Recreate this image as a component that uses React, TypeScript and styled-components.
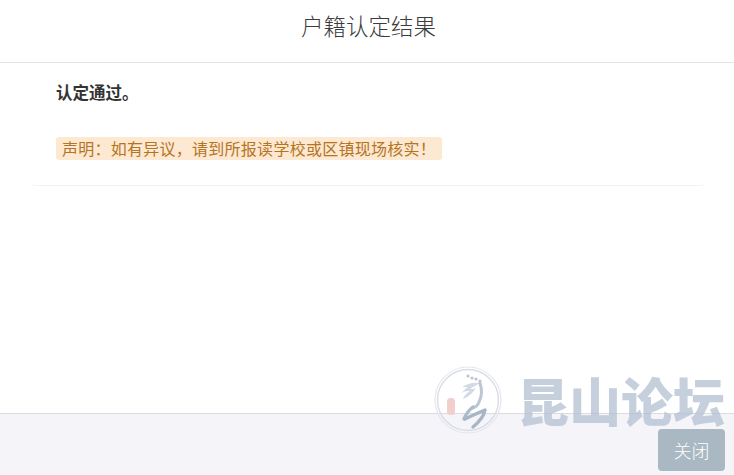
import React from 'react';
import styled, { createGlobalStyle } from 'styled-components';

const GlobalStyle = createGlobalStyle`
  html, body {
    margin: 0;
    padding: 0;
    background: #fff;
    overflow: hidden;
  }
  * {
    box-sizing: border-box;
  }
`;

const Dialog = styled.div`
  position: relative;
  display: flex;
  flex-direction: column;
  width: 734px;
  height: 475px;
  font-family: "Microsoft YaHei", "Noto Sans CJK SC", sans-serif;
  color: #333;
`;

const Header = styled.header`
  height: 63px;
  flex: none;
  padding-left: 3px;
  border-bottom: 1px solid #e5e5e5;
  text-align: center;
  font-size: 22.5px;
  line-height: 50px;
  font-weight: 300;
  color: #3c3c3c;
`;

const Body = styled.main`
  flex: 1;
  padding: 0 30px 0 32px;
`;

const Panel = styled.section`
  height: 123px;
  padding: 16px 24px 0;
  border-bottom: 1px solid #f3f3f3;
  border-radius: 0 0 4px 4px;
`;

const Result = styled.p`
  margin: 0;
  font-size: 16.5px;
  line-height: 26px;
  font-weight: 700;
  color: #333;
`;

const Notice = styled.span`
  display: inline-block;
  margin-top: 32px;
  height: 23px;
  padding: 0 6px;
  border-radius: 3px;
  background: #fde8d2;
  color: #b5741f;
  font-size: 16px;
  line-height: 23px;
  letter-spacing: 0.26px;
  white-space: nowrap;
`;

const Footer = styled.footer`
  height: 62px;
  flex: none;
  display: flex;
  justify-content: flex-end;
  align-items: flex-end;
  padding: 0 9px 4px 0;
  background: #f4f4f9;
  border-top: 1px solid #dcdce0;
`;

const CloseButton = styled.button`
  position: relative;
  z-index: 2;
  width: 67px;
  height: 42px;
  padding: 0;
  border: 0;
  border-radius: 4px;
  background: #a9b8c2;
  color: #fff;
  font-family: inherit;
  font-size: 18px;
  font-weight: 300;
`;

const Watermark = styled.div`
  position: absolute;
  left: 434px;
  top: 366px;
  display: flex;
  align-items: center;
  gap: 15px;
  pointer-events: none;
  z-index: 1;
`;

const WatermarkText = styled.span`
  font-family: "Noto Sans CJK SC", sans-serif;
  font-size: 52px;
  line-height: 68px;
  font-weight: 900;
  color: rgba(176, 190, 208, 0.72);
  white-space: nowrap;
`;

function LogoSeal() {
  return (
    <svg width="68" height="68" viewBox="0 0 68 68" fill="none">
      <circle cx="34" cy="34" r="33" stroke="#e4e7ed" strokeWidth="1.2" />
      <circle cx="34" cy="34" r="30.5" stroke="#d8dde6" strokeWidth="1.4" />
      <rect x="13" y="32" width="8" height="17" rx="3.5" fill="#f0cfcd" />
      <g fill="#b9c4d2">
        <circle cx="34" cy="10" r="1.6" />
        <circle cx="38" cy="12" r="1.6" />
        <circle cx="42" cy="13" r="1.6" />
        <circle cx="46" cy="15" r="1.6" />
      </g>
      <path
        d="M28 21c6-4 12-5 18-4-3 2-7 4-10 6 2 0 4 0 6-1-3 5-8 9-13 11 1-3 3-6 7-8-3 0-5 0-8 2 2-3 4-5 6-6-2 0-4 0-6 0z"
        fill="#d3dae5"
      />
      <path
        d="M46 17c2 6 2 13-1 19-1 3-3 5-6 6"
        stroke="#bcc7d5"
        strokeWidth="3"
        strokeLinecap="round"
      />
      <path
        d="M30 53c2-5 5-9 9-12"
        stroke="#aebbcb"
        strokeWidth="3.4"
        strokeLinecap="round"
      />
      <path
        d="M31 53c6-3 13-6 20-9-1 6-6 12-12 17"
        stroke="#a7b5c6"
        strokeWidth="3.4"
        strokeLinecap="round"
        strokeLinejoin="round"
      />
    </svg>
  );
}

export default function App() {
  return (
    <Dialog>
      <GlobalStyle />
      <Header>户籍认定结果</Header>
      <Body>
        <Panel>
          <Result>认定通过。</Result>
          <Notice>声明：如有异议，请到所报读学校或区镇现场核实！</Notice>
        </Panel>
      </Body>
      <Footer>
        <CloseButton>关闭</CloseButton>
      </Footer>
      <Watermark>
        <LogoSeal />
        <WatermarkText>昆山论坛</WatermarkText>
      </Watermark>
    </Dialog>
  );
}
